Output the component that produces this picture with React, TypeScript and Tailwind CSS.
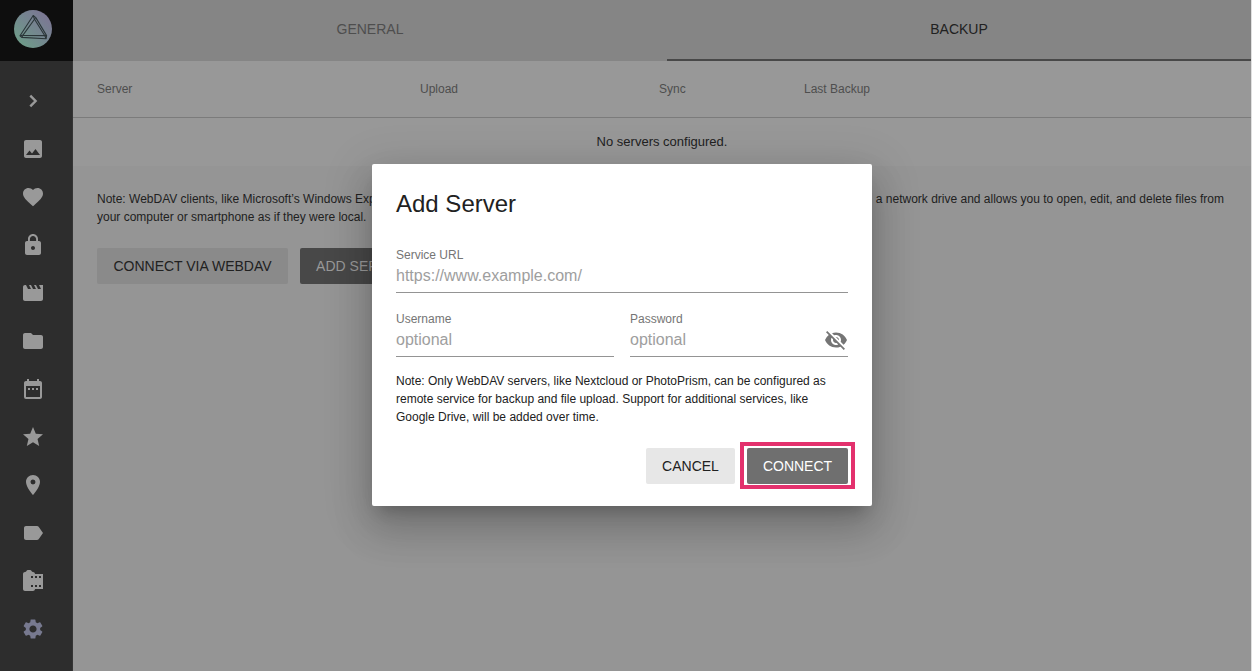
import type { ComponentType } from "react";
import {
  MdDateRange,
  MdFavorite,
  MdFolder,
  MdLabel,
  MdLock,
  MdMovie,
  MdPhoto,
  MdPlace,
  MdSettings,
  MdStar,
  MdVisibilityOff,
} from "react-icons/md";

function ChevronIcon({ size = 24 }: { size?: number }) {
  return (
    <svg width={size} height={size} viewBox="0 0 24 24" fill="none" stroke="currentColor" strokeWidth="2.4">
      <path d="M9.3 6.7 L14.6 12 L9.3 17.3" />
    </svg>
  );
}

function FilmRollIcon({ size = 24 }: { size?: number }) {
  return (
    <svg width={size} height={size} viewBox="0 0 24 24" fill="currentColor">
      <path
        fillRule="evenodd"
        d="M4 3c.7 0 1-.2 1.3-.8C5.7 1.4 6.200 1 7 1h2c.8 0 1.300.4 1.700 1.200.3.600.6.8 1.300.8 1.100 0 2 .9 2 2h8v15h-8c0 1.100-.9 2-2 2H4c-1.100 0-2-.9-2-2V5c0-1.100.9-2 2-2z M10 7h2v2h-2z M14 7h2v2h-2z M18 7h2v2h-2z M10 16h2v2h-2z M14 16h2v2h-2z M18 16h2v2h-2z"
      />
    </svg>
  );
}

const navItems: { label: string; Icon: ComponentType<{ size?: number }>; active?: boolean }[] = [
  { label: "Expand", Icon: ChevronIcon },
  { label: "Search", Icon: MdPhoto },
  { label: "Favorites", Icon: MdFavorite },
  { label: "Private", Icon: MdLock },
  { label: "Videos", Icon: MdMovie },
  { label: "Albums", Icon: MdFolder },
  { label: "Calendar", Icon: MdDateRange },
  { label: "Moments", Icon: MdStar },
  { label: "Places", Icon: MdPlace },
  { label: "Labels", Icon: MdLabel },
  { label: "Library", Icon: FilmRollIcon },
  { label: "Settings", Icon: MdSettings, active: true },
];

function Logo() {
  return (
    <svg width="38" height="38" viewBox="0 0 38 38" fill="none">
      <defs>
        <linearGradient id="logo" x1="6" y1="32" x2="32" y2="6" gradientUnits="userSpaceOnUse">
          <stop offset="0" stopColor="#6f9a89" />
          <stop offset="0.5" stopColor="#74878f" />
          <stop offset="1" stopColor="#7b7893" />
        </linearGradient>
      </defs>
      <circle cx="19" cy="19" r="19" fill="url(#logo)" />
      <g stroke="#2b3639" strokeWidth="1.1" strokeLinejoin="round">
        <path d="M19.2 5.5 L6 25.8 L7.8 27.4 L32 28.8 L32.6 25.6 L21.8 7.6 Z" />
        <path d="M21.4 8 L8.8 25.4 L32.6 25.6" />
        <path d="M19.2 5.5 L20.4 9 L31 26 L32 28.8" />
        <path d="M7.8 27.4 L8.8 25.4 M6 25.8 L8.8 25.4" />
      </g>
    </svg>
  );
}

function Sidebar() {
  return (
    <nav className="flex w-[73px] shrink-0 flex-col border-r border-[#353535] bg-[#2d2d2d]">
      <div className="-mr-px flex h-[61px] items-start bg-[#0e0e0e] pt-[10px] pl-[14px]">
        <Logo />
      </div>
      <ul className="flex flex-col pt-4">
        {navItems.map(({ label, Icon, active }) => (
          <li
            key={label}
            aria-label={label}
            className={`flex h-12 items-center pl-[21px] ${active ? "text-[#77798f]" : "text-[#999999]"}`}
          >
            <Icon size={24} />
          </li>
        ))}
      </ul>
    </nav>
  );
}

function Field({ label, placeholder, secret }: { label: string; placeholder: string; secret?: boolean }) {
  return (
    <label className="flex h-[46px] w-full shrink-0 flex-col border-b border-[#949494]">
      <span className="h-[17px] text-xs leading-4 text-[#757575]">{label}</span>
      <span className="flex h-6 items-center">
        <input
          className="w-full min-w-0 bg-transparent text-base leading-6 outline-none placeholder:text-[#9e9e9e] placeholder:opacity-100"
          placeholder={placeholder}
        />
        {secret && <MdVisibilityOff size={24} className="shrink-0 text-[#757575]" />}
      </span>
    </label>
  );
}

function AddServerDialog() {
  return (
    <div
      role="dialog"
      className="absolute top-[164px] left-[372px] flex h-[342px] w-[500px] flex-col rounded-[2px] bg-white px-6 pt-6 text-[#212121] shadow-[0_11px_15px_-7px_rgba(0,0,0,0.2),0_24px_38px_3px_rgba(0,0,0,0.14),0_9px_46px_8px_rgba(0,0,0,0.12)]"
    >
      <h2 className="h-[59px] shrink-0 text-2xl leading-8">Add Server</h2>
      <Field label="Service URL" placeholder="https://www.example.com/" />
      <div className="mt-[18px] grid shrink-0 grid-cols-2 gap-4">
        <Field label="Username" placeholder="optional" />
        <Field label="Password" placeholder="optional" secret />
      </div>
      <p className="mt-[15px] text-xs leading-[18px]">
        Note: Only WebDAV servers, like Nextcloud or PhotoPrism, can be configured as
        <br />
        remote service for backup and file upload. Support for additional services, like
        <br />
        Google Drive, will be added over time.
      </p>
      <div className="-mr-[7px] mt-4 flex items-center justify-end gap-[5px] text-sm">
        <button className="h-9 w-[89px] rounded-[2px] bg-[#e7e7e7]">CANCEL</button>
        <div className="border-4 border-[#e3316d] px-[3px] pt-[2px] pb-[1px]">
          <button className="block h-9 w-[101px] rounded-[2px] bg-[#6f6f6f] text-white">CONNECT</button>
        </div>
      </div>
    </div>
  );
}

export default function App() {
  return (
    <div className="relative flex h-[671px] w-[1252px] overflow-hidden bg-[#959595] font-['Liberation_Sans',Arial,sans-serif] text-[#212121]">
      <Sidebar />
      <main className="flex flex-1 flex-col border-r border-[#e0e0e0]">
        <div className="flex h-[61px] bg-[#858585] text-sm">
          <div className="flex w-[594px] items-center justify-center pb-[3px] text-[#4e4e4e]">GENERAL</div>
          <div className="flex flex-1 items-center justify-center border-b-2 border-[#484848] pb-[1px] text-[#212121]">
            BACKUP
          </div>
        </div>
        <div className="flex h-[57px] items-center border-b border-[#7b7b7b] bg-[#989898] pl-6 text-xs text-[#4e4e4e]">
          <span className="w-[323px]">Server</span>
          <span className="w-[239px]">Upload</span>
          <span className="w-[145px]">Sync</span>
          <span>Last Backup</span>
        </div>
        <div className="flex h-12 items-center justify-center bg-[#989898] text-[13px]">No servers configured.</div>
        <div className="flex flex-col px-6 pt-6">
          <p className="whitespace-nowrap text-xs leading-[18px]">
            <span className="flex justify-between">
              <span>Note: WebDAV clients, like Microsoft’s Windows Explorer</span>
              <span className="mr-[3px]">a network drive and allows you to open, edit, and delete files from</span>
            </span>
            your computer or smartphone as if they were local.
          </p>
          <div className="mt-[22px] flex gap-3 text-sm">
            <button className="h-9 w-[191px] rounded-[2px] bg-[#8a8a8a]">CONNECT VIA WEBDAV</button>
            <button className="h-9 w-[123px] rounded-[2px] bg-[#484848] text-[#999999]">ADD SERVER</button>
          </div>
        </div>
      </main>
      <AddServerDialog />
    </div>
  );
}
